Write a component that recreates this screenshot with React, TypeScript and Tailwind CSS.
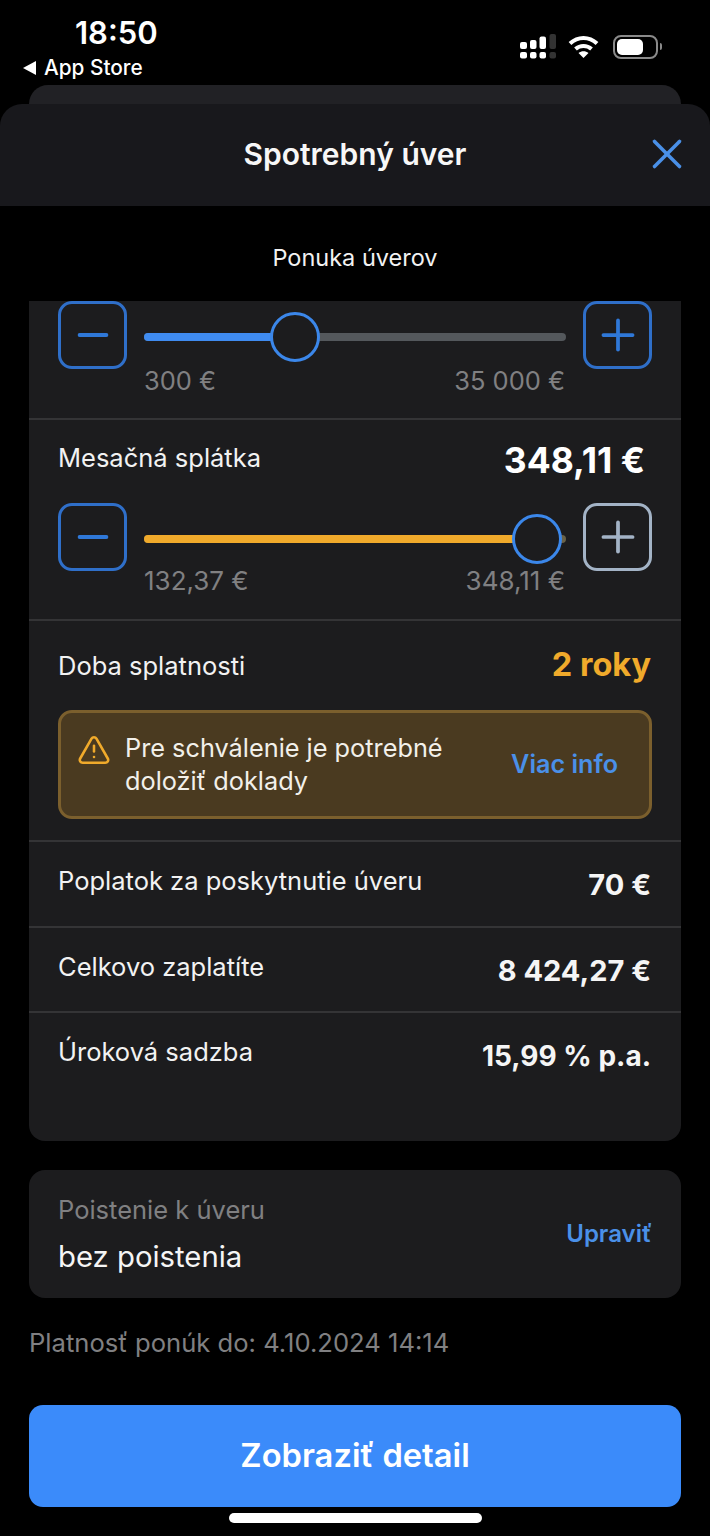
import { X, Plus, Minus, TriangleAlert } from "lucide-react";

function StepButton({ kind, muted }: { kind: "minus" | "plus"; muted?: boolean }) {
  return (
    <div
      className={`flex h-[68px] w-[69px] shrink-0 items-center justify-center rounded-[14px] border-[3px] ${
        muted ? "border-[#a3b3c6] text-[#a3b3c6]" : "border-[#2f6fc9] text-[#2f78d8]"
      }`}
    >
      {kind === "minus" ? <Minus size={46} strokeWidth={2} /> : <Plus size={50} strokeWidth={1.8} />}
    </div>
  );
}

function Slider({ fill, thumb, color, tail }: { fill: string; thumb: string; color: string; tail: string }) {
  return (
    <div className="relative mx-[17px] h-[60px] flex-1">
      <div className={`absolute left-0 right-0 top-[32px] h-2 rounded-full ${tail}`} />
      <div className={`absolute left-0 top-[32px] h-2 rounded-full ${color} ${fill}`} />
      <div className={`absolute top-[11px] h-[50px] w-[50px] rounded-full border-[3px] border-[#3b87ea] bg-[#1c1c1e] ${thumb}`} />
    </div>
  );
}

function InfoRow({ label, value, size, height }: { label: string; value: string; size: string; height: string }) {
  return (
    <div className={`flex items-start justify-between border-t-2 border-[#343436] pl-[29px] pr-[30px] pt-[22px] ${height}`}>
      <span className="text-[25.5px] leading-[34px] text-[#f2f2f2]">{label}</span>
      <span className={`mt-[4px] font-bold leading-[34px] text-[#f5f5f5] ${size}`}>{value}</span>
    </div>
  );
}

export default function App() {
  return (
    <div className="h-[1536px] w-[710px] overflow-hidden bg-black font-['Inter',sans-serif] text-white">
      <div className="flex h-[85px] justify-between pl-[23px] pr-[48px]">
        <div>
          <div className="pl-[52px] pt-[13px] text-[31px] font-semibold leading-[40px]">18:50</div>
          <div className="mt-[2px] flex items-center gap-[8px] text-[20.8px] font-medium leading-[26px]">
            <span className="h-0 w-0 border-y-[7px] border-r-[13px] border-y-transparent border-r-white" />
            App Store
          </div>
        </div>
        <div className="flex items-center gap-[14px] pt-[8px]">
          <svg className="-mr-[2px]" width="36" height="25" viewBox="0 0 36 25" fill="white">
            <rect x="0" y="8" width="7" height="7" rx="2" />
            <rect x="0" y="18" width="7" height="6.5" rx="2" />
            <rect x="10" y="6" width="6.5" height="9" rx="2" />
            <rect x="10" y="18" width="6.5" height="6.5" rx="2" />
            <rect x="19.5" y="2.5" width="6.5" height="12.5" rx="2" />
            <rect x="19.5" y="18" width="6.5" height="6.5" rx="2" />
            <rect x="29.5" y="0" width="6.5" height="15" rx="2" fill="#333" />
            <rect x="29.5" y="18" width="6.5" height="6.5" rx="2" fill="#333" />
          </svg>
          <svg width="31" height="24" viewBox="0 0 31 24" fill="none" stroke="white" strokeWidth="4">
            <path d="M2 8.5C10 1 21 1 29 8.5" />
            <path d="M7.5 14C12 10 19 10 23.5 14" />
            <path d="M15.5 23L10.5 18C13.5 15.5 17.5 15.5 20.5 18Z" fill="white" stroke="none" />
          </svg>
          <div className="flex items-center gap-[2px]">
            <div className="h-[24px] w-[45px] rounded-[8px] border-2 border-[#8a8a8a] p-[2px]">
              <div className="h-full w-[26px] rounded-[5px] bg-white" />
            </div>
            <div className="h-[7px] w-[2px] rounded-r bg-[#8a8a8a]" />
          </div>
        </div>
      </div>

      <div className="mx-[29px] h-[19px] rounded-t-[20px] bg-[#212125]" />

      <div className="relative flex h-[102px] items-center justify-center rounded-t-[22px] bg-[#18181c] pb-[2px]">
        <span className="text-[30px] font-semibold leading-none text-[#f7f7f7]">Spotrebný úver</span>
        <X className="absolute right-[18px] top-[25px] text-[#4a90e8]" size={50} strokeWidth={1.7} />
      </div>

      <div className="flex h-[95px] items-center justify-center pt-[8px] text-[23.5px] text-[#f2f2f2]">Ponuka úverov</div>

      <div className="mx-[29px] h-[840px] rounded-b-[16px] bg-[#1c1c1e]">
        <div className="h-[117px] pl-[29px] pr-[29px]">
          <div className="flex items-start">
            <StepButton kind="minus" />
            <Slider fill="w-[130px]" thumb="left-[126px]" color="bg-[#3f8bf0]" tail="bg-[#54585c]" />
            <StepButton kind="plus" />
          </div>
          <div className="ml-[86px] mr-[87px] -mt-[2px] flex justify-between text-[25.5px] leading-[28px] text-[#808082]">
            <span>300 €</span>
            <span>35 000 €</span>
          </div>
        </div>

        <div className="h-[201px] border-t-2 border-[#343436] pl-[29px] pr-[29px]">
          <div className="flex h-[83px] justify-between pr-[7px] pt-[21px]">
            <span className="text-[25.5px] leading-[34px] text-[#f2f2f2]">Mesačná splátka</span>
            <span className="mt-[1px] text-[35.5px] font-bold leading-[38px] text-white">348,11 €</span>
          </div>
          <div className="flex items-start">
            <StepButton kind="minus" />
            <Slider fill="w-[372px]" thumb="left-[368px]" color="bg-[#f0aa2b]" tail="bg-[#6a6248]" />
            <StepButton kind="plus" muted />
          </div>
          <div className="ml-[86px] mr-[87px] -mt-[4px] flex justify-between text-[26px] leading-[28px] text-[#808082]">
            <span>132,37 €</span>
            <span>348,11 €</span>
          </div>
        </div>

        <div className="h-[221px] border-t-2 border-[#343436] pl-[29px] pr-[29px]">
          <div className="flex h-[89px] items-center justify-between pr-[1px]">
            <span className="pt-[2px] text-[25.5px] text-[#f2f2f2]">Doba splatnosti</span>
            <span className="text-[32.5px] font-bold text-[#f0aa2b]">2 roky</span>
          </div>
          <div className="flex h-[109px] items-center justify-between rounded-[14px] border-[3px] border-[#7b5f2d] bg-[#4a3a20] pl-[16px] pr-[31px]">
            <div className="flex items-start gap-[14px]">
              <TriangleAlert className="text-[#f0aa2b]" size={34} strokeWidth={1.8} />
              <span className="-mt-[2px] text-[25.3px] leading-[33px] text-[#f2f0ea]">
                Pre schválenie je potrebné
                <br />
                doložiť doklady
              </span>
            </div>
            <span className="text-[25.2px] font-semibold text-[#4a90e8]">Viac info</span>
          </div>
        </div>

        <InfoRow label="Poplatok za poskytnutie úveru" value="70 €" size="text-[29px]" height="h-[86px]" />
        <InfoRow label="Celkovo zaplatíte" value="8 424,27 €" size="text-[29px]" height="h-[85px]" />
        <InfoRow label="Úroková sadzba" value="15,99 % p.a." size="text-[28px]" height="h-[85px]" />
      </div>

      <div className="mx-[29px] mt-[29px] flex h-[128px] items-center justify-between rounded-[16px] bg-[#1c1c1e] pl-[29px] pr-[29px]">
        <div>
          <div className="text-[25.5px] leading-[34px] text-[#808082]">Poistenie k úveru</div>
          <div className="mt-[11px] text-[29.3px] leading-[38px] text-[#f5f5f5]">bez poistenia</div>
        </div>
        <span className="text-[24px] font-semibold text-[#4a90e8]">Upraviť</span>
      </div>

      <div className="mx-[29px] mt-[28px] text-[25.6px] leading-[34px] text-[#808082]">Platnosť ponúk do: 4.10.2024 14:14</div>

      <div className="mx-[29px] mt-[45px] flex h-[102px] items-center justify-center rounded-[14px] bg-[#3b8bfa] text-[32.7px] font-semibold text-white">
        Zobraziť detail
      </div>

      <div className="mx-auto mt-[6px] h-[10px] w-[253px] rounded-full bg-white" />
    </div>
  );
}
